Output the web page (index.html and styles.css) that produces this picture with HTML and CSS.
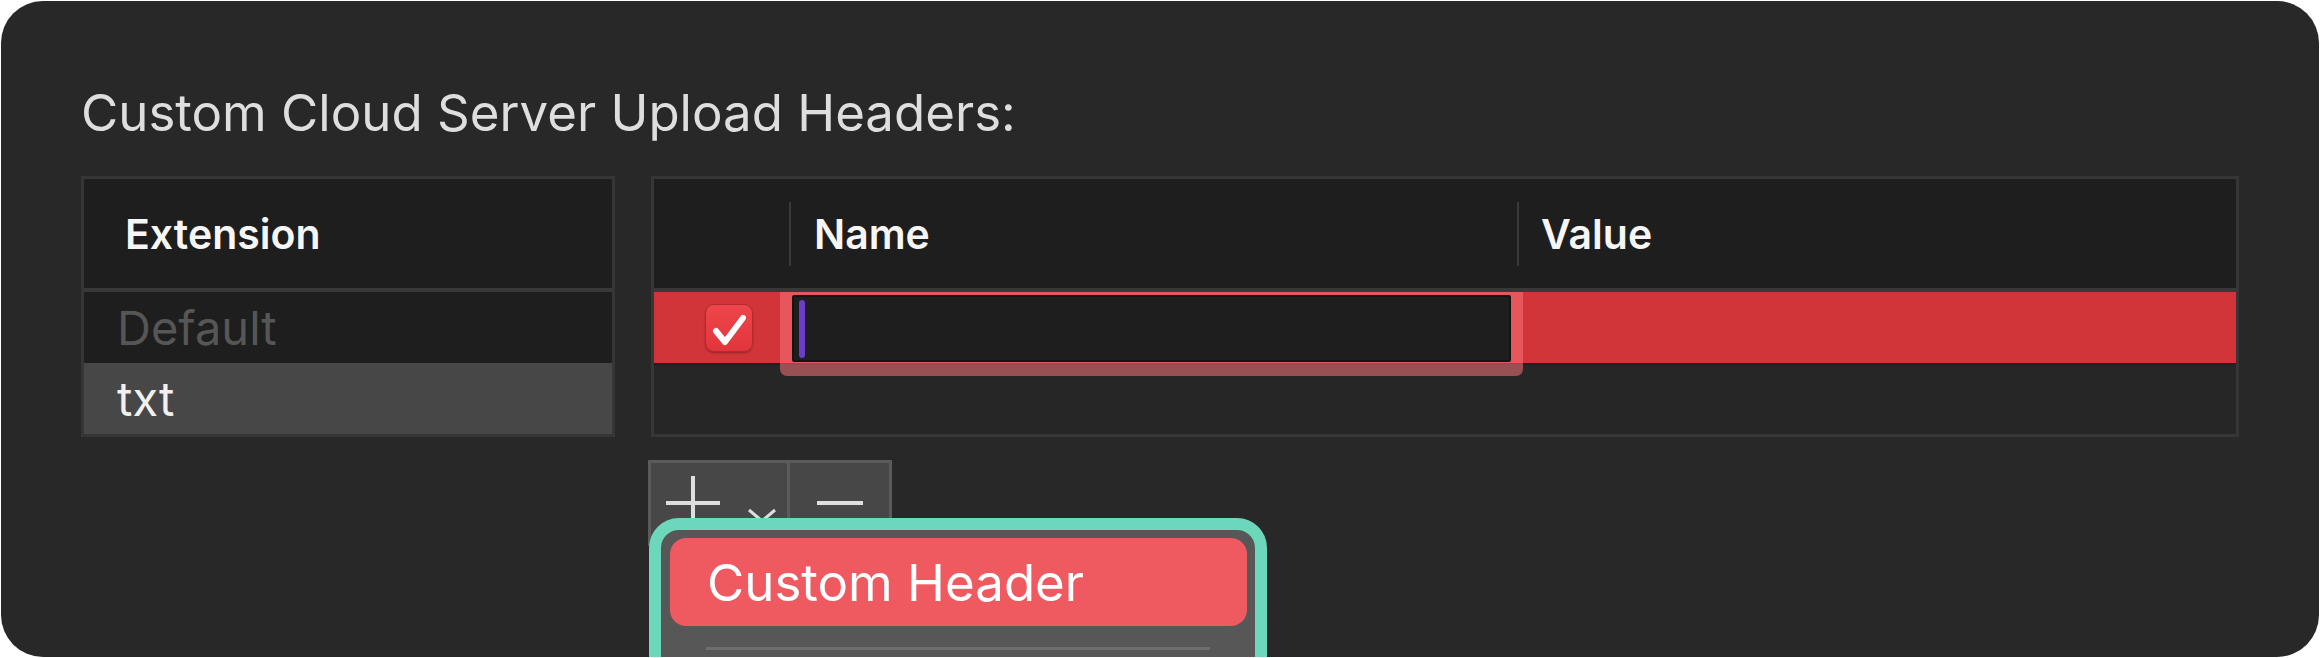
FILE: index.html
```html
<!DOCTYPE html>
<html lang="en">
  <head>
    <meta charset="UTF-8">
    <title>Custom Cloud Server Upload Headers</title>
    <link rel="stylesheet" href="styles.css">
  </head>
  <body>
    <div class="window">
      <h1 class="title">Custom Cloud Server Upload Headers:</h1>
      <div class="tables">
        <div class="table ext-table">
          <div class="thead">
            <span class="th th-ext">Extension</span>
          </div>
          <div class="row row-disabled">Default</div>
          <div class="row row-selected">txt</div>
        </div>
        <div class="table header-table">
          <div class="thead">
            <span class="th th-check"></span>
            <span class="col-sep"></span>
            <span class="th th-name">Name</span>
            <span class="col-sep"></span>
            <span class="th th-value">Value</span>
          </div>
          <div class="row row-editing">
            <div class="cell cell-check">
              <span class="checkbox">
                <svg width="48" height="48" viewBox="0 0 48 48">
                  <path d="M11 27 L20 38 L38 14" fill="none" stroke="#fff" stroke-width="6" stroke-linecap="round" stroke-linejoin="round"/>
                </svg>
              </span>
            </div>
            <div class="cell cell-name">
              <div class="field"><span class="caret"></span></div>
            </div>
            <div class="cell cell-value"></div>
          </div>
        </div>
        <div class="buttons">
          <div class="btn btn-add">
            <svg class="plus" width="54" height="54" viewBox="0 0 54 54">
              <path d="M0 27 H54 M27 0 V54" stroke="#dedede" stroke-width="4"/>
            </svg>
            <svg class="chevron" width="30" height="16" viewBox="0 0 30 16">
              <path d="M2 2 L15 13 L28 2" fill="none" stroke="#dedede" stroke-width="3"/>
            </svg>
          </div>
          <div class="btn btn-remove">
            <svg width="46" height="6" viewBox="0 0 46 6">
              <path d="M0 3 H46" stroke="#dedede" stroke-width="4"/>
            </svg>
          </div>
        </div>
      </div>
      <!-- popup menu for the + button, cut off by the window edge -->
      <div class="menu">
        <div class="menu-item">Custom Header</div>
        <div class="menu-sep"></div>
      </div>
    </div>
  </body>
</html>
```

FILE: styles.css
```css
body {
  margin: 0;
  background: #ffffff;
  font-family: Inter, "Noto Sans", sans-serif;
  overflow: hidden;
  height: 658px;
}

.window {
  position: relative;
  margin: 1px;
  height: 656px;
  box-sizing: border-box;
  padding: 81px 80px 0 80px;
  background: #282828;
  border-radius: 42px;
  overflow: hidden;
}

.title {
  margin: 0;
  font-size: 51px;
  font-weight: 400;
  line-height: 62px;
  color: #dedede;
}

.tables {
  display: grid;
  grid-template-columns: 534px 1fr;
  column-gap: 36px;
  margin-top: 32px;
}

.table {
  height: 261px;
  box-sizing: border-box;
  border: 3px solid #363636;
  background: #262626;
  display: flex;
  flex-direction: column;
}

.thead {
  position: relative;
  z-index: 1;
  height: 109px;
  flex: none;
  display: flex;
  align-items: center;
  background: #1e1e1e;
  border-bottom: 4px solid #383838;
}

.th {
  font-size: 41px;
  font-weight: 600;
  color: #f6f6f6;
}

.th-ext {
  padding-left: 41px;
}

.th-check {
  width: 135px;
}

.col-sep {
  width: 2px;
  height: 64px;
  background: #3a3a3a;
}

.th-name {
  width: 726px;
  box-sizing: border-box;
  padding-left: 23px;
}

.th-value {
  flex: 1;
  padding-left: 22px;
}

.row {
  height: 71px;
  flex: none;
  display: flex;
  align-items: center;
  box-sizing: border-box;
  padding-left: 33px;
  font-size: 47px;
}

.row-disabled {
  background: #1e1e1e;
  color: #565656;
}

.row-selected {
  background: #474747;
  color: #f0f0f0;
}

.row-editing {
  padding-left: 0;
  align-items: stretch;
  background: #d13539;
  border-bottom: 2px solid #1f1f1f;
  height: 73px;
}

.cell-check {
  width: 135px;
  box-sizing: border-box;
  padding-left: 51px;
  display: flex;
  align-items: center;
}

.checkbox {
  width: 48px;
  height: 48px;
  box-sizing: border-box;
  border-radius: 9px;
  background: linear-gradient(#ee464c, #e1353b);
  border: 1px solid #b52a2f;
  box-shadow: 0 1px 2px rgba(0, 0, 0, 0.3);
  display: flex;
  align-items: center;
  justify-content: center;
}

.checkbox svg {
  margin: -1px;
}

.cell-name {
  width: 728px;
  padding: 3px 0 0 3px;
  box-sizing: border-box;
}

.field {
  width: 719px;
  height: 67px;
  box-sizing: border-box;
  border: 2px solid #141414;
  border-radius: 2px;
  background: #1e1e1e;
  box-shadow: 0 2px 0 12px rgba(245, 115, 118, 0.55);
  display: flex;
  align-items: center;
  padding-left: 5px;
}

.caret {
  width: 6px;
  height: 58px;
  border-radius: 3px;
  background: #6a3ec8;
}

.cell-value {
  flex: 1;
}

.buttons {
  grid-column: 2;
  display: flex;
  margin: 23px 0 0 -3px;
}

.btn {
  height: 86px;
  box-sizing: border-box;
  background: #474747;
  border: 3px solid #5b5b5b;
  display: flex;
  align-items: center;
}

.btn-add {
  width: 142px;
  padding-left: 15px;
}

.chevron {
  margin: 26px 0 0 27px;
}

.btn-remove {
  width: 102px;
  border-left: none;
  justify-content: center;
}

.menu {
  position: absolute;
  left: 648px;
  top: 517px;
  width: 618px;
  height: 200px;
  box-sizing: border-box;
  border: 12px solid #6dd7bb;
  border-radius: 30px;
  background: #575757;
  padding: 8px 8px 0 9px;
}

.menu-item {
  height: 88px;
  border-radius: 16px;
  background: #ee5a5f;
  color: #ffffff;
  font-size: 51px;
  display: flex;
  align-items: center;
  padding-left: 37px;
}

.menu-sep {
  height: 3px;
  margin: 21px 37px 0 36px;
  background: #6e6e6e;
}
```
